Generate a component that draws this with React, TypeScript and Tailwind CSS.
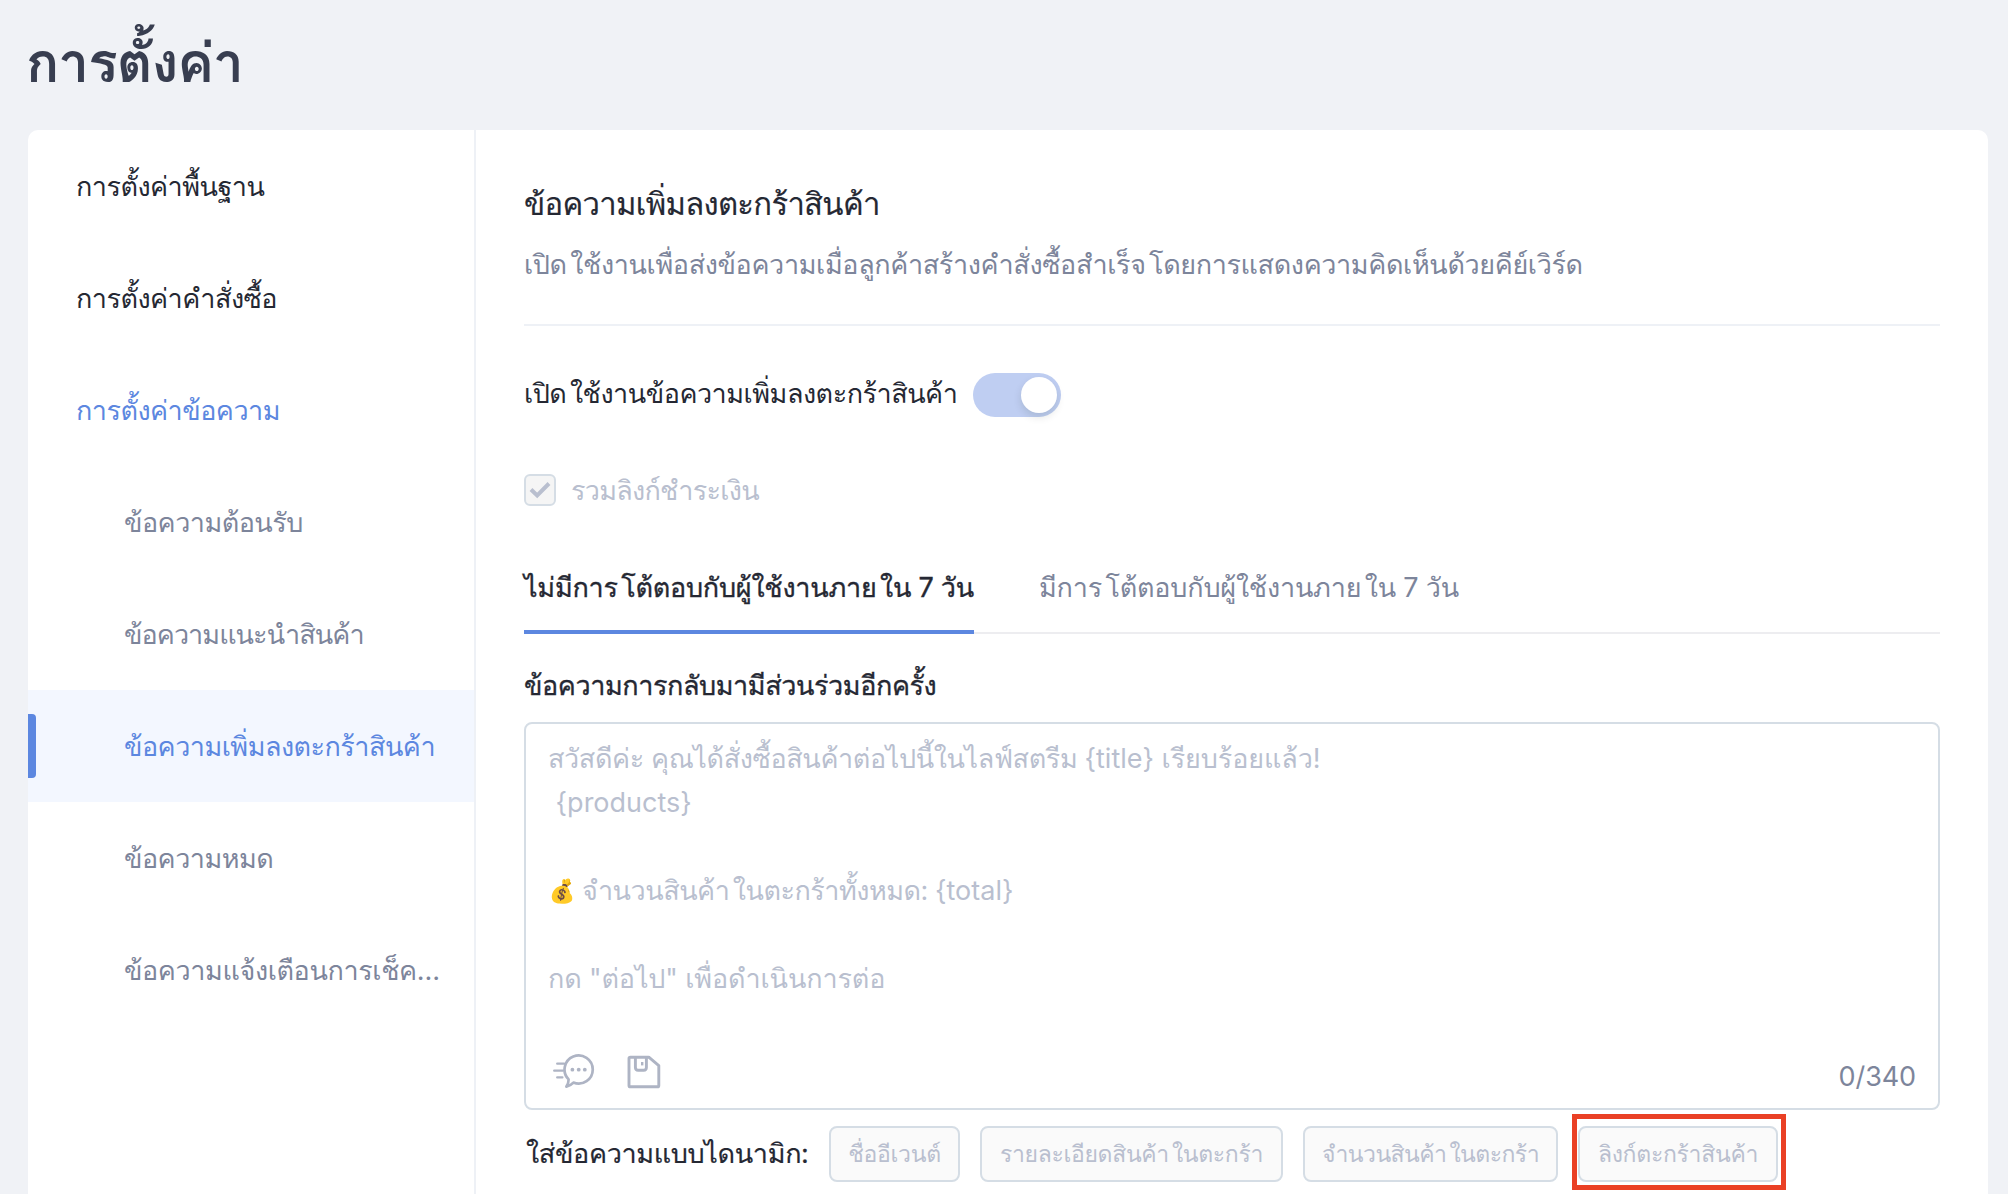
import { Fragment } from 'react';
import { clsx } from 'clsx';

const menu = [
  { label: 'การตั้งค่าพื้นฐาน' },
  { label: 'การตั้งค่าคำสั่งซื้อ' },
  { label: 'การตั้งค่าข้อความ', open: true },
  { label: 'ข้อความต้อนรับ', child: true },
  { label: 'ข้อความแนะนำสินค้า', child: true, tight: true },
  { label: 'ข้อความเพิ่มลงตะกร้าสินค้า', child: true, active: true },
  { label: 'ข้อความหมด', child: true },
  { label: 'ข้อความแจ้งเตือนการเช็ค…', child: true, loose: true },
];

// Adds a little air before the tall leading vowels, unless a mark already precedes them
function Thai({ children }: { children: string }) {
  return (
    <>
      {children.split(/(?<=[ก-า])(?=[ใโ])/).map((part, index) => (
        <Fragment key={index}>
          {index > 0 ? <span className="ml-[0.13em]">{part}</span> : part}
        </Fragment>
      ))}
    </>
  );
}

function ChatIcon() {
  return (
    <svg width="42" height="36" viewBox="0 0 42 36" fill="none" stroke="#aeb4c4" strokeWidth="2.7" strokeLinecap="round" strokeLinejoin="round">
      <path d="M15.6 26.4A14.1 14.1 0 1 1 20.4 29.6C18.6 31.6 16.2 33 13.4 33.6C14.9 31.4 15.6 29 15.6 26.4Z" />
      <path d="M4.2 10.7H11M1.2 17.7H10M4.2 24.4H9.4" strokeWidth="2.3" />
      <g fill="#aeb4c4" stroke="none">
        <circle cx="19.4" cy="16.7" r="1.9" />
        <circle cx="25.7" cy="16.7" r="1.9" />
        <circle cx="31.8" cy="16.7" r="1.9" />
      </g>
    </svg>
  );
}

function SaveIcon() {
  return (
    <svg width="34" height="34" viewBox="0 0 34 34" fill="none" stroke="#aeb4c4" strokeWidth="2.9" strokeLinejoin="round">
      <path d="M3.4 2.2H21.8L31.8 10.6V30.4Q31.8 31.8 30.4 31.8H3.4Q2 31.8 2 30.4V3.6Q2 2.2 3.4 2.2Z" />
      <path d="M8.4 2.2V12.6Q8.4 15.3 11.1 15.3H16.7Q19.4 15.3 19.4 12.6V2.2" />
      <path d="M15.2 7V10.4" strokeWidth="2.4" />
    </svg>
  );
}

function DynamicButton({ label, className }: { label: string; className: string }) {
  return (
    <button
      className={clsx(
        'flex h-14 items-center justify-center whitespace-nowrap rounded-lg border-2 border-[#d5dde5] bg-[#fafafa] text-[23px] leading-10 text-[#b9bfcf]',
        className
      )}
    >
      <span><Thai>{label}</Thai></span>
    </button>
  );
}

function Sidebar() {
  return (
    <nav className="w-[448px] shrink-0 border-r-2 border-[#eef1f6]">
      {menu.map((item) => (
        <div
          key={item.label}
          className={clsx(
            'relative flex h-28 items-center whitespace-nowrap',
            item.child ? 'pl-24' : 'pl-12',
            item.active && 'bg-[#f3f7ff]',
            item.active || item.open ? 'text-[#5c87e0]' : item.child ? 'text-[#7d859b]' : 'text-[#252833]',
            item.tight ? 'tracking-[-0.95px]' : item.loose ? 'tracking-[-0.4px]' : 'tracking-[-0.53px]'
          )}
        >
          {item.active && <div className="absolute left-0 h-16 w-2 rounded-r bg-[#5c87e0]" />}
          <span className="pt-px">{item.label}</span>
        </div>
      ))}
    </nav>
  );
}

export default function App() {
  return (
    <div className="flex h-[1194px] w-[2008px] flex-col overflow-hidden bg-[#f0f2f6] font-['Inter','Loma',sans-serif] text-[27px] leading-[44px] tracking-[-0.5px] text-[#252833]">
      <h1 className="h-[130px] shrink-0 pl-[26px] pt-[30px] text-[55px] font-bold leading-[64px] tracking-[-1px] text-[#383e50]">การตั้งค่า</h1>

      <div className="ml-7 mr-5 flex h-[1100px] shrink-0 overflow-hidden rounded-t-[10px] bg-white">
        <Sidebar />

        <main className="flex-1 px-12 pt-[52px]">
          <h2 className="text-[31px] tracking-[-0.68px] [-webkit-text-stroke:0.2px]">ข้อความเพิ่มลงตะกร้าสินค้า</h2>
          <p className="mt-[17px] whitespace-nowrap border-b-2 border-[#eef1f6] pb-[37px] tracking-[-0.39px] text-[#7d859b]">
            <Thai>เปิดใช้งานเพื่อส่งข้อความเมื่อลูกค้าสร้างคำสั่งซื้อสำเร็จโดยการแสดงความคิดเห็นด้วยคีย์เวิร์ด</Thai>
          </p>

          <div className="mt-[47px] flex h-11 items-center">
            <span className="w-[449px] whitespace-nowrap pb-[3px]"><Thai>เปิดใช้งานข้อความเพิ่มลงตะกร้าสินค้า</Thai></span>
            <div className="flex h-11 w-[88px] items-center justify-end rounded-full bg-[#bfcef2] pr-1">
              <div className="size-9 rounded-full bg-white shadow-[0_4px_8px_rgba(0,35,11,0.12)]" />
            </div>
          </div>

          <div className="mt-[57px] flex h-8 items-center gap-[15px]">
            <div className="flex size-8 items-center justify-center rounded-md border-2 border-[#d5dde5] bg-[#f5f5f5]">
              <svg width="22" height="18" viewBox="0 0 22 18" fill="none" stroke="#b9bfcf" strokeWidth="4">
                <path d="M2 8.5L8.2 14.5L20 2.5" />
              </svg>
            </div>
            <span className="pt-px tracking-[-0.75px] text-[#b9bfcf]">รวมลิงก์ชำระเงิน</span>
          </div>

          <div className="mt-[60px] flex h-[68px] gap-[65px] whitespace-nowrap border-b-2 border-[#ededf0]">
            <div className="h-[68px] w-[450px] border-b-4 border-[#5c87e0] tracking-[-0.25px] [-webkit-text-stroke:0.35px]">
              <Thai>ไม่มีการโต้ตอบกับผู้ใช้งานภายใน 7 วัน</Thai>
            </div>
            <div className="tracking-[-0.22px] text-[#7d859b]"><Thai>มีการโต้ตอบกับผู้ใช้งานภายใน 7 วัน</Thai></div>
          </div>

          <h3 className="mt-[30px] tracking-[-0.43px] [-webkit-text-stroke:0.35px]">ข้อความการกลับมามีส่วนร่วมอีกครั้ง</h3>
          <div className="mt-[14px] flex h-[388px] flex-col justify-between rounded-lg border-2 border-[#d5dde5] px-[22px] pt-[13px]">
            <div className="whitespace-pre text-[#b9bfcf]">
              <div className="h-11 tracking-[-0.4px]">
                <Thai>สวัสดีค่ะ คุณได้สั่งซื้อสินค้าต่อไปนี้ในไลฟ์สตรีม </Thai>
                <span className="tracking-normal">{'{title}'}</span>
                <span className="tracking-[-0.1px]"> เรียบร้อยแล้ว!</span>
              </div>
              <div className="h-11 tracking-normal">{' {products}'}</div>
              <div className="mt-11 h-11">
                <span className="inline-block w-[27px] -translate-y-[2px] scale-y-110 text-center text-[21px]">💰</span>
                <Thai> จำนวนสินค้าในตะกร้าทั้งหมด: </Thai>
                <span className="tracking-normal">{'{total}'}</span>
              </div>
              <div className="mt-11 h-11 tracking-[-0.15px]">กด "ต่อไป" เพื่อดำเนินการต่อ</div>
            </div>
            <div className="flex h-[54px] items-start pl-[5px]">
              <div className="-mt-px"><ChatIcon /></div>
              <div className="ml-8 mt-px"><SaveIcon /></div>
              <span className="ml-auto mt-[3px] leading-10 tracking-[-0.1px] text-[#7d859b]">0/340</span>
            </div>
          </div>

          <div className="mt-4 flex h-14 items-center">
            <span className="w-[305px] whitespace-nowrap pl-[2px] tracking-[-0.35px] [-webkit-text-stroke:0.2px]">ใส่ข้อความแบบไดนามิก:</span>
            <DynamicButton label="ชื่ออีเวนต์" className="w-[131px] tracking-[-0.3px]" />
            <DynamicButton label="รายละเอียดสินค้าในตะกร้า" className="ml-5 w-[303px] tracking-[-0.34px]" />
            <DynamicButton label="จำนวนสินค้าในตะกร้า" className="ml-5 w-[255px] tracking-[-0.55px]" />
            <div className="relative ml-5">
              <DynamicButton label="ลิงก์ตะกร้าสินค้า" className="w-[200px] tracking-[-0.3px]" />
              <div className="absolute -left-[6px] -top-3 h-[76px] w-[214px] border-[5px] border-[#ea4025]" />
            </div>
          </div>
        </main>
      </div>
    </div>
  );
}
